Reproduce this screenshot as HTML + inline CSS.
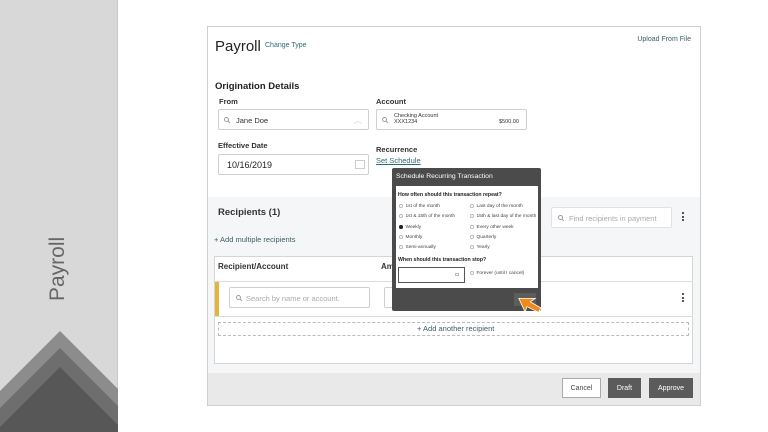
<!DOCTYPE html>
<html><head><meta charset="utf-8"><style>
*{margin:0;padding:0;box-sizing:border-box}
body{width:768px;height:432px;background:#fff;position:relative;overflow:hidden;font-family:"Liberation Sans",sans-serif;color:#333}
.a{position:absolute;white-space:nowrap}
.inp{position:absolute;background:#fff;border:1px solid #cfcfcf;border-radius:2px}
.teal{color:#2b6d76}
.lbl{font-size:7.5px;font-weight:bold;color:#333}
.r{position:absolute;font-size:4.8px;color:#444;white-space:nowrap}
.r i{display:inline-block;width:3.5px;height:3.5px;border:0.5px solid #bbb;border-radius:50%;margin-right:3px;vertical-align:-0.5px}
.r i.on{background:#222;border-color:#222}
.srch{position:absolute;width:6px;height:6px}
.dots{position:absolute;width:2px}
.dots b{display:block;width:2px;height:2px;background:#222;border-radius:50%;margin-bottom:1.5px}
.btn{position:absolute;display:flex;align-items:center;justify-content:center;font-size:7px}
</style></head><body>
<div class="a" style="left:0;top:0;width:118px;height:432px;background:#d8d8d8;border-right:1px solid #c8c8c8"></div>
<div class="a" style="left:46px;top:301px;transform:rotate(-90deg);transform-origin:0 0;font-size:21px;color:#666;">Payroll</div>
<svg class="a" style="left:0;top:320px" width="118" height="112">
<polygon points="60,11 130,81 130,112 -10,112 -10,81" fill="#8c8c8c"/>
<polygon points="60,28 130,98 130,112 -10,112 -10,98" fill="#6e6e6e"/>
<polygon points="60,47 130,117 -10,117" fill="#575757"/>
</svg>
<div class="a" style="left:207px;top:26px;width:494px;height:380px;border:1px solid #cfcfcf;background:#fff"></div>
<div class="a" style="left:208px;top:197px;width:492px;height:176px;background:#f5f6f7"></div>
<div class="a" style="left:208px;top:373px;width:492px;height:32px;background:#e9e9e9"></div>
<div class="a" style="left:215px;top:38px;font-size:15px;color:#222">Payroll</div>
<div class="a teal" style="left:265px;top:42px;font-size:7px">Change Type</div>
<div class="a" style="right:77px;top:36px;font-size:7px;color:#3a5f66">Upload From File</div>
<div class="a" style="left:215px;top:81px;font-size:9.5px;font-weight:bold;color:#222">Origination Details</div>
<div class="a lbl" style="left:219px;top:97px">From</div>
<svg width="0" height="0" style="position:absolute"><defs><g id="mg"><circle cx="2.5" cy="2.5" r="2" fill="none" stroke="#999" stroke-width="0.9"/><line x1="4" y1="4" x2="6" y2="6" stroke="#999" stroke-width="0.9"/></g></defs></svg>
<div class="inp" style="left:218px;top:109px;width:151px;height:21px"><svg class="srch" style="left:5px;top:7px"><use href="#mg"/></svg><span class="a" style="left:17px;top:6px;font-size:7.5px">Jane Doe</span><span class="a" style="left:135px;top:5px;font-size:8px;color:#ccc">︿</span></div>
<div class="a lbl" style="left:376px;top:97px">Account</div>
<div class="inp" style="left:376px;top:109px;width:151px;height:21px"><svg class="srch" style="left:5px;top:7px"><use href="#mg"/></svg><span class="a" style="left:17px;top:3px;font-size:5.5px;line-height:6px">Checking Account<br>XXX1234</span><span class="a" style="left:122px;top:9px;font-size:5.5px">$500.00</span></div>
<div class="a lbl" style="left:218px;top:141px">Effective Date</div>
<div class="inp" style="left:218px;top:154px;width:151px;height:21px"><span class="a" style="left:8px;top:5px;font-size:9px;color:#222">10/16/2019</span><span class="a" style="left:136px;top:5px;width:10px;height:9px;border:1px solid #ccc"></span></div>
<div class="a lbl" style="left:376px;top:145px">Recurrence</div>
<div class="a teal" style="left:376px;top:156px;font-size:7.5px;text-decoration:underline">Set Schedule</div>
<div class="a" style="left:218px;top:207px;font-size:9.5px;font-weight:bold;color:#333">Recipients (1)</div>
<div class="inp" style="left:551px;top:207px;width:121px;height:21px;border-color:#e2e2e2"><svg class="srch" style="left:6px;top:7px"><use href="#mg"/></svg><span class="a" style="left:17px;top:6px;font-size:7.5px;color:#aaa">Find recipients in payment</span></div>
<div class="dots" style="left:682px;top:212px"><b></b><b></b><b></b></div>
<div class="a" style="left:214px;top:235px;font-size:7.5px;color:#3a5f66">+ Add multiple recipients</div>
<div class="a" style="left:214px;top:256px;width:479px;height:108px;background:#fff;border:1px solid #d5d5d5"></div>
<div class="a" style="left:214px;top:281px;width:479px;height:1px;background:#ddd"></div>
<div class="a" style="left:214px;top:316px;width:479px;height:1px;background:#ddd"></div>
<div class="a" style="left:218px;top:262px;font-size:8px;font-weight:bold;color:#333">Recipient/Account</div>
<div class="a" style="left:381px;top:262px;font-size:8px;font-weight:bold;color:#333">Am</div>
<div class="a" style="left:215px;top:282px;width:4px;height:34px;background:#e2b53c"></div>
<div class="inp" style="left:229px;top:287px;width:141px;height:21px"><svg class="srch" style="left:6px;top:7px"><use href="#mg"/></svg><span class="a" style="left:16px;top:6px;font-size:7.5px;color:#aaa">Search by name or account.</span></div>
<div class="inp" style="left:384px;top:287px;width:20px;height:21px"></div>
<div class="dots" style="left:682px;top:293px"><b></b><b></b><b></b></div>
<div class="a" style="left:218px;top:322px;width:471px;height:14px;border:1px dashed #bbb"></div>
<div class="a" style="left:417px;top:324px;font-size:7.5px;color:#3a5f66">+ Add another recipient</div>
<div class="btn" style="left:562px;top:378px;width:39px;height:20px;background:#fff;border:1px solid #aaa;color:#444">Cancel</div>
<div class="btn" style="left:608px;top:378px;width:33px;height:20px;background:#5b5b5b;color:#fff">Draft</div>
<div class="btn" style="left:649px;top:378px;width:44px;height:20px;background:#5b5b5b;color:#fff">Approve</div>
<div class="a" style="left:392px;top:168px;width:149px;height:143px;background:#4b4b4b;border-radius:2px"></div>
<div class="a" style="left:396px;top:173px;font-size:6.8px;color:#fff">Schedule Recurring Transaction</div>
<div class="a" style="left:396px;top:186px;width:142px;height:102px;background:#fff"></div>
<div class="a" style="left:398px;top:192px;font-size:5.2px;font-weight:bold;color:#222">How often should this transaction repeat?</div>
<div class="r" style="left:399px;top:204px"><i></i>1st of the month</div>
<div class="r" style="left:399px;top:214px"><i></i>1st &amp; 15th of the month</div>
<div class="r" style="left:399px;top:225px"><i class="on"></i>Weekly</div>
<div class="r" style="left:399px;top:235px"><i></i>Monthly</div>
<div class="r" style="left:399px;top:245px"><i></i>Semi-annually</div>
<div class="r" style="left:470px;top:204px"><i></i>Last day of the month</div>
<div class="r" style="left:470px;top:214px"><i></i>15th &amp; last day of the month</div>
<div class="r" style="left:470px;top:225px"><i></i>Every other week</div>
<div class="r" style="left:470px;top:235px"><i></i>Quarterly</div>
<div class="r" style="left:470px;top:245px"><i></i>Yearly</div>
<div class="a" style="left:398px;top:257px;font-size:5.2px;font-weight:bold;color:#222">When should this transaction stop?</div>
<div class="a" style="left:398px;top:267px;width:67px;height:16px;border:1px solid #555"><span class="a" style="left:56px;top:5px;width:4px;height:3px;border:0.5px solid #bbb"></span></div>
<div class="r" style="left:470px;top:271px"><i></i>Forever (until I cancel)</div>
<div class="a" style="left:514px;top:293px;width:22px;height:13px;background:#5d5d5d"></div>
<svg class="a" style="left:518px;top:292px" width="30" height="26"><polygon points="4,3 4,18 8,14 16,24 20,21 13,11 19,10" fill="#f08a1c" stroke="#fff" stroke-width="0.8" transform="rotate(-25 10 12)"/></svg>
</body></html>
